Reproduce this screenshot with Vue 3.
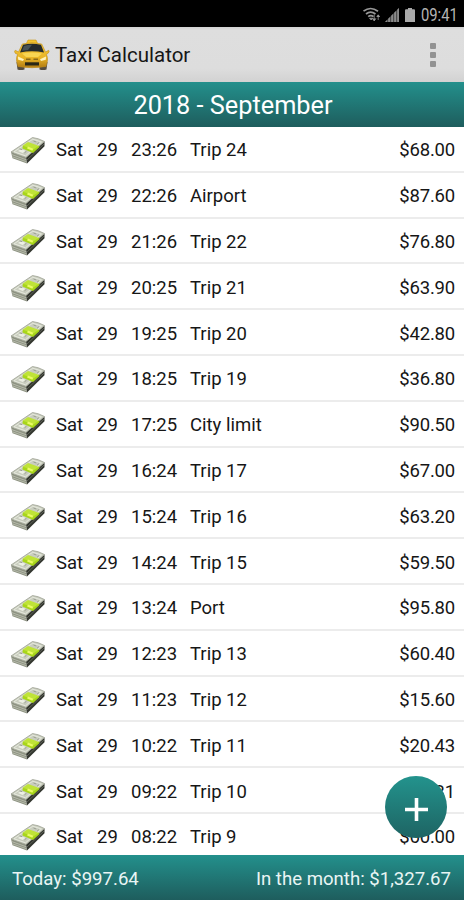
<template>
  <div class="app">
    <div class="status-bar">
      <svg class="wifi" width="20" height="16" viewBox="0 0 20 16">
        <g fill="none" stroke="#989898" stroke-width="1.7">
          <path d="M1.5 4.2Q8.5 -1.2 16 4.2" />
          <path d="M4 7Q8.5 3.4 13.5 7" />
          <path d="M6.2 9.7Q8.8 7.4 11.5 9.7" />
        </g>
        <path d="M7.5 11.2h3.2L9.2 13zM12.2 7.5v6M10.4 11.5l1.8 2.4 1.7-2.4M16.2 13V8M14.7 10l1.5-2.2 1.6 2.2" fill="#989898" stroke="#989898" stroke-width="0.8" />
      </svg>
      <svg class="signal" width="14" height="14" viewBox="0 0 14 14">
        <path d="M0 14L14 0V14Z" fill="#4c4c4c" />
        <path d="M0 14L2 12V14ZM3.2 14V10.8L5 9V14ZM6.2 14V7.8L8 6V14ZM9.2 14V4.8L11 3V14ZM12.2 14V1.8L14 0V14Z" fill="#8a8a8a" />
      </svg>
      <svg class="battery" width="10" height="14" viewBox="0 0 10 14">
        <path d="M3 0h4v1.3h2Q10 1.3 10 2.5V14H0V2.5Q0 1.3 1 1.3h2z" fill="#a9a9a9" />
      </svg>
      <span class="clock">09:41</span>
    </div>

    <header class="toolbar">
      <svg class="taxi" width="36" height="32" viewBox="0 0 36 32">
        <defs>
          <linearGradient id="body" x1="0" y1="0" x2="0" y2="1">
            <stop offset="0" stop-color="#f4c83c" />
            <stop offset="0.6" stop-color="#e9b526" />
            <stop offset="1" stop-color="#b17b13" />
          </linearGradient>
        </defs>
        <path d="M2.500 23h8v7.500q-4 1.200-7 0zM25.500 23h8l-1 7.500q-3.500 1.200-7 0z" fill="#554c3f" />
        <path d="M12.500 4.300L14 1h8l1.500 3.300z" fill="#f3c42e" stroke="#c99819" stroke-width="0.6" />
        <path d="M8.300 5Q18 2.600 27.700 5L31.500 13 34.700 11.300Q36 12.500 33.500 14.800L32.300 15.300Q34 18 33.400 22L32 27.500Q18 30 4 27.500L2.600 22Q2 18 3.700 15.300L1.500 14.500Q-.3 12.300 1.300 11.300L4.500 13z" fill="url(#body)" stroke="#bf8d1b" stroke-width="0.6" />
        <path d="M9 5.800Q18 3.600 27 5.800L30 13.400Q18 11.200 6 13.400z" fill="#252b2c" />
        <path d="M10 7Q14 5.600 18 5.700L14 11 8 11.800z" fill="#465255" />
        <path d="M8 14.500Q18 12.500 28 14.500L24 18H12z" fill="#f8d552" />
        <path d="M4 17.500l6 2.700-1 1.800-4.800-1.300zM32 17.500l-6 2.700 1 1.800 4.800-1.300z" fill="#fff3be" />
        <path d="M12 19.500h4.500v1.500H12zM19.500 19.500H24v1.500h-4.500z" fill="#8a6a18" />
        <path d="M11 23.300h14v3.200H11z" fill="#292716" />
      </svg>
      <span class="app-title">Taxi Calculator</span>
      <div class="overflow"><i></i><i></i><i></i></div>
    </header>

    <div class="month">2018 - September</div>

    <main class="trips">
      <div v-for="trip in trips" :key="trip.time" class="trip">
        <svg class="money" width="36" height="30" viewBox="0 0 36 30">
          <!-- side faces of the bundle -->
          <path d="M1 17L16 22.500 17 28.500 2.500 23.300z" fill="#8d9281" />
          <path d="M16 22.500L34.500 6.500V11.200L17 28.500z" fill="#33362f" />
          <path d="M1.800 19.600l14.500 5.200M2.300 21.800l14.400 5" stroke="#c6cabb" stroke-width="0.7" />
          <path d="M17 25L34.300 8.800" stroke="#6d7166" stroke-width="0.7" />
          <!-- top note -->
          <path d="M1 17L22.500 2.500Q28 3 34.500 6.500L16 22.500z" fill="#c9cdbf" stroke="#959a89" stroke-width="0.7" />
          <path d="M4 16.800L22.800 4.200 31.500 7 15.500 20.800z" fill="none" stroke="#e6e9dd" stroke-width="1" />
          <path d="M8 16l3-1.800 4.500 1.600-2.800 2.300z" fill="#edf0e5" />
          <path d="M9.500 13.800l2.600.9M14.500 17.800l2-1.600M23.500 6l2.800 1M27 9.200l2-1.600" stroke="#9ba092" stroke-width="1" />
          <!-- paper band -->
          <path d="M12.800 10.500L18 7 29.300 11 23.300 16z" fill="#bfe338" />
          <path d="M12.800 10.500L23.300 14.500 29.300 10.500V12.300L23 18 12.500 13.500z" fill="#a8d61a" />
          <path d="M17.500 12.500l5.300 2.200" stroke="#eafb65" stroke-width="2.200" />
        </svg>
        <span class="day">Sat</span>
        <span class="date">29</span>
        <span class="time">{{ trip.time }}</span>
        <span class="name">{{ trip.name }}</span>
        <span class="price">{{ trip.price }}</span>
      </div>
    </main>

    <footer class="totals">
      <span class="today">Today: $997.64</span>
      <span class="in-month">In the month: $1,327.67</span>
    </footer>

    <button class="add" type="button" aria-label="Add">
      <svg width="23" height="23" viewBox="0 0 23 23">
        <path d="M11.500 0v23M0 11.500h23" stroke="#fff" stroke-width="3.600" />
      </svg>
    </button>
  </div>
</template>

<script setup>
const trips = [
  { time: '23:26', name: 'Trip 24', price: '$68.00' },
  { time: '22:26', name: 'Airport', price: '$87.60' },
  { time: '21:26', name: 'Trip 22', price: '$76.80' },
  { time: '20:25', name: 'Trip 21', price: '$63.90' },
  { time: '19:25', name: 'Trip 20', price: '$42.80' },
  { time: '18:25', name: 'Trip 19', price: '$36.80' },
  { time: '17:25', name: 'City limit', price: '$90.50' },
  { time: '16:24', name: 'Trip 17', price: '$67.00' },
  { time: '15:24', name: 'Trip 16', price: '$63.20' },
  { time: '14:24', name: 'Trip 15', price: '$59.50' },
  { time: '13:24', name: 'Port', price: '$95.80' },
  { time: '12:23', name: 'Trip 13', price: '$60.40' },
  { time: '11:23', name: 'Trip 12', price: '$15.60' },
  { time: '10:22', name: 'Trip 11', price: '$20.43' },
  { time: '09:22', name: 'Trip 10', price: '$36.31' },
  { time: '08:22', name: 'Trip 9', price: '$60.00' }
]
</script>

<style>
body {
  margin: 0;
}
</style>

<style scoped>
.app {
  position: relative;
  display: flex;
  flex-direction: column;
  width: 464px;
  height: 900px;
  overflow: hidden;
  background: #fff;
  color: #161616;
  font-family: Roboto, "Liberation Sans", sans-serif;
}

.status-bar {
  display: flex;
  align-items: center;
  justify-content: flex-end;
  flex: none;
  height: 27px;
  padding: 2px 6px 0 0;
  box-sizing: border-box;
  background: #000;
  color: #b4b4b4;
}

.wifi {
  margin-right: 3px;
}

.signal {
  margin-right: 6px;
}

.battery {
  margin-right: 6px;
}

.clock {
  width: 37px;
  font-size: 18px;
  line-height: 22px;
  transform: scaleX(0.82);
  transform-origin: left;
  white-space: nowrap;
}

.toolbar {
  display: flex;
  align-items: center;
  flex: none;
  height: 55px;
  padding: 0 28px 0 14px;
  box-sizing: border-box;
  background: linear-gradient(#d2d2d2 0, #dedede 3px, #dddddd 75%, #d2d2d2);
}

.app-title {
  flex: 1;
  margin-left: 5px;
  font-size: 20.5px;
}

.overflow {
  display: flex;
  flex-direction: column;
  gap: 3px;
}

.overflow i {
  width: 6px;
  height: 6px;
  border-radius: 1px;
  background: #929292;
}

.month {
  flex: none;
  height: 45px;
  line-height: 48px;
  padding-left: 2px;
  box-sizing: border-box;
  background: linear-gradient(#23908c, #1e5d5d);
  color: #fff;
  font-size: 25.3px;
  text-align: center;
}

.trips {
  flex: 1;
  min-height: 0;
  overflow: hidden;
}

.trip {
  display: flex;
  align-items: center;
  height: 45.8px;
  padding: 3px 9px 0 10px;
  box-sizing: border-box;
  border-bottom: 2px solid #ececec;
  font-size: 18.5px;
  white-space: nowrap;
}

.money {
  flex: none;
  margin-right: 10px;
}

.day {
  width: 41px;
}

.date {
  width: 34px;
}

.time {
  width: 59px;
}

.name {
  flex: 1;
}

.price {
  letter-spacing: -0.2px;
}

.totals {
  display: flex;
  justify-content: space-between;
  flex: none;
  height: 45px;
  line-height: 48px;
  padding: 0 13px 0 12px;
  background: linear-gradient(#23908c, #1e5d5d);
  color: #e9f5f4;
  font-size: 18.6px;
}

.add {
  position: absolute;
  left: 385px;
  top: 776px;
  display: flex;
  align-items: center;
  justify-content: center;
  width: 62px;
  height: 62px;
  padding: 5px 0 0;
  border: 0;
  border-radius: 50%;
  background: linear-gradient(#23938d, #1e6463);
}
</style>
